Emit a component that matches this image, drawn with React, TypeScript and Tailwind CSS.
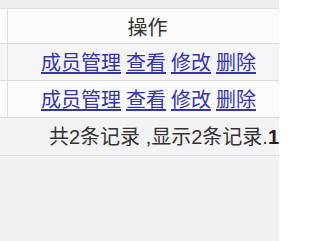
const font = { fontFamily: '"Liberation Sans", "Noto Sans CJK SC", sans-serif' };

const actions = ["成员管理", "查看", "修改", "删除"];

function ActionRow({ bg }: { bg: string }) {
  return (
    <div className={`flex h-[37px] border-b border-[#dedede] ${bg}`}>
      <div className="w-[8px] shrink-0 border-r border-[#dedede]" />
      <div className="flex flex-1 items-center justify-center gap-[5px] pl-[10px] pt-[2px]">
        {actions.map((a) => (
          <a key={a} href="#" className="text-[#3434ad] underline underline-offset-[2px]">
            {a}
          </a>
        ))}
      </div>
    </div>
  );
}

export default function App() {
  return (
    <div
      className="flex h-[241px] w-[279px] flex-col overflow-hidden bg-[#f1f0f3] text-[20px] leading-none text-[#333]"
      style={font}
    >
      <div className="h-[9px] shrink-0 border-b border-[#e2e2e2] bg-[#efefef]" />
      <div className="flex h-[35px] shrink-0 border-b border-[#dedede] bg-[#fbfbfb]">
        <div className="w-[8px] shrink-0 border-r border-[#dedede]" />
        <div className="flex flex-1 items-center justify-center pl-[8px] pt-[3px]">操作</div>
      </div>
      <ActionRow bg="bg-[#f5f5f7]" />
      <ActionRow bg="bg-[#fbfbfb]" />
      <div className="flex h-[38px] shrink-0 items-center whitespace-nowrap border-b border-[#dcdcdc] bg-[#f3f3f5] pl-[49px]">
        共2条记录 ,显示2条记录.<b className="font-bold text-[#222]">1</b>
      </div>
      <div className="flex-1" />
    </div>
  );
}
